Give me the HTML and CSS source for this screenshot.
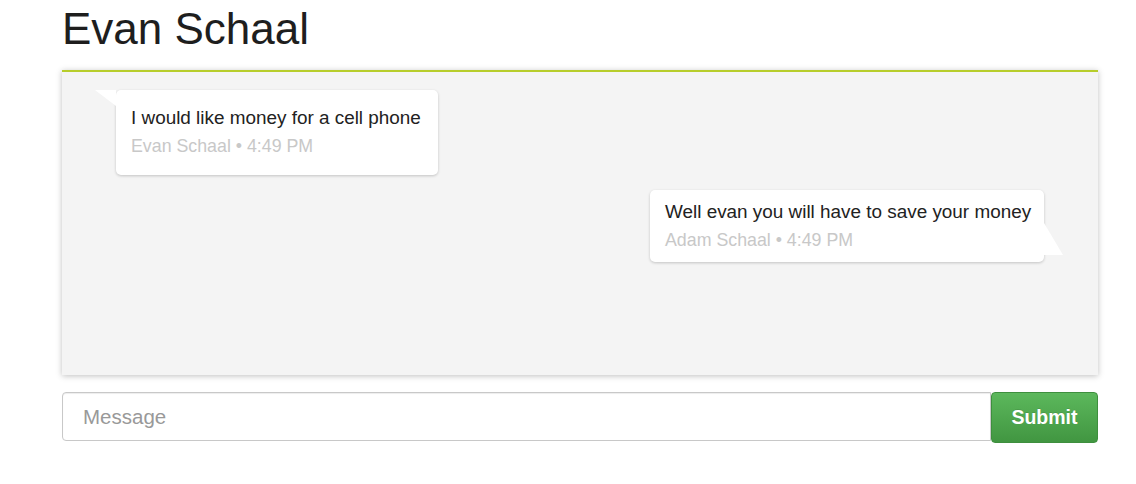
FILE: index.html
```html
<!DOCTYPE html>
<html>
<head>
<meta charset="utf-8">
<link rel="stylesheet" href="styles.css">
</head>
<body>
<div class="container">
  <h1 class="title">Evan Schaal</h1>
  <div class="chat">
    <div class="msg msg-left">
      <div class="msg-text">I would like money for a cell phone</div>
      <div class="msg-meta">Evan Schaal • 4:49 PM</div>
    </div>
    <div class="msg msg-right">
      <div class="msg-text">Well evan you will have to save your money</div>
      <div class="msg-meta">Adam Schaal • 4:49 PM</div>
    </div>
  </div>
  <form class="composer">
    <input class="composer-input" type="text" placeholder="Message">
    <button class="composer-btn" type="button">Submit</button>
  </form>
</div>
</body>
</html>
```
FILE: styles.css
```css
html, body {
  margin: 0;
  padding: 0;
  background: #fff;
  font-family: "Liberation Sans", Arial, Helvetica, sans-serif;
  color: #222;
}
.container {
  width: 1036px;
  margin-left: 62px;
}
.title {
  margin: 5px 0 18px 0;
  font-size: 44px;
  line-height: 47px;
  font-weight: normal;
  color: #1e1e1e;
}
.chat {
  height: 305px;
  box-sizing: border-box;
  border-top: 2px solid #b7cd2b;
  background: #f4f4f4;
  box-shadow: 0 1px 6px rgba(0, 0, 0, 0.25);
  padding: 18px 54px;
  display: flex;
  flex-direction: column;
  gap: 15px;
}
.msg {
  position: relative;
  background: #fff;
  border-radius: 5px;
  box-shadow: 0 1px 3px rgba(0, 0, 0, 0.2);
  padding: 11px 15px;
  display: flex;
  flex-direction: column;
  gap: 6px;
}
.msg-left {
  align-self: flex-start;
  width: 292px;
  padding: 17px 15px 18px 15px;
}
.msg-right {
  align-self: flex-end;
  width: 364px;
}
.msg-left::before {
  content: "";
  position: absolute;
  left: -21px;
  top: 0;
  width: 0;
  height: 0;
  border-top: 16px solid #fff;
  border-left: 21px solid transparent;
}
.msg-right::after {
  content: "";
  position: absolute;
  right: -19px;
  bottom: 7px;
  width: 0;
  height: 0;
  border-bottom: 32px solid #fff;
  border-right: 19px solid transparent;
}
.msg-text {
  font-size: 18.9px;
  line-height: 22px;
  color: #222;
  white-space: nowrap;
}
.msg-meta {
  font-size: 17.8px;
  line-height: 22px;
  color: #c8c8c8;
  white-space: nowrap;
}
.composer {
  margin: 17px 0 0 0;
  display: flex;
  align-items: flex-start;
}
.composer-input {
  flex: 1;
  height: 49px;
  box-sizing: border-box;
  border: 1px solid #c8c8c8;
  border-radius: 4px 0 0 4px;
  padding: 0 20px;
  font-family: "Liberation Sans", Arial, sans-serif;
  font-size: 20.5px;
  color: #555;
  outline: none;
  box-shadow: inset 0 1px 1px rgba(0, 0, 0, 0.075);
}
.composer-input::placeholder {
  color: #999;
}
.composer-btn {
  width: 107px;
  height: 51px;
  box-sizing: border-box;
  border: 1px solid #3e8f3e;
  border-radius: 4px;
  background: linear-gradient(#5cb85c, #419641);
  color: #fff;
  font-family: "Liberation Sans", Arial, sans-serif;
  font-size: 19.5px;
  font-weight: bold;
  padding: 0;
  text-shadow: 0 -1px 0 rgba(0, 0, 0, 0.1);
}
```
